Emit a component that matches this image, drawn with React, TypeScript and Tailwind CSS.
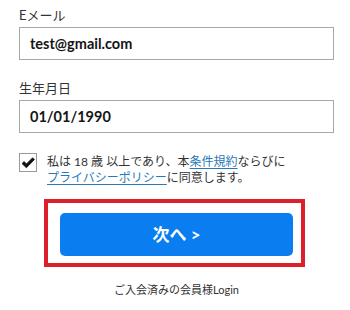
import React from "react";

export default function App() {
  const font = { fontFamily: '"Lato", "Noto Sans CJK JP", sans-serif' };
  return (
    <div
      className="w-[350px] h-[310px] bg-white pl-[19px] pt-[7px] text-[#222]"
      style={font}
    >
      <div className="w-[315px]">
        <div className="text-[13px] leading-[16px] text-[#333] mb-[4px]">Eメール</div>
        <div className="h-[33px] border border-[#a8a8a8] flex items-center pl-[10px] text-[14.5px] font-bold text-[#151515]">
          test@gmail.com
        </div>
        <div className="text-[13px] leading-[16px] text-[#333] mt-[20px] mb-[4px]">生年月日</div>
        <div className="h-[33px] border border-[#a8a8a8] flex items-center pl-[10px] text-[14.5px] font-bold text-[#151515]">
          01/01/1990
        </div>

        <div className="flex items-start mt-[20px]">
          <div className="w-[18px] h-[19px] border border-[#9a9a9a] bg-white flex items-center justify-center shrink-0">
            <svg width="14" height="12" viewBox="0 0 14 12">
              <path
                d="M1 6.6 L3.2 4.6 L5.4 7 L11.6 0.8 L13.4 2.6 L5.4 10.8 Z"
                fill="#111"
                stroke="#111"
                strokeWidth="0.8"
                strokeLinejoin="round"
              />
            </svg>
          </div>
          <div className="ml-[10px] text-[12px] leading-[16px] text-[#333] mt-[1px]">
            <div>
              私は 18 歳 以上であり、本
              <span className="text-[#2a78b6] underline underline-offset-2">条件規約</span>
              ならびに
            </div>
            <div>
              <span className="text-[#2a78b6] underline underline-offset-2">プライバシーポリシー</span>
              に同意します。
            </div>
          </div>
        </div>

        <div className="ml-[25px] mt-[13px] w-[261px] h-[68px] border-[4px] border-[#dc1f2b] pt-[10px] pl-[12px]">
          <div className="w-[233px] h-[43px] rounded-[5px] bg-[#0a7ef0] flex items-center justify-center text-white text-[17px] font-bold">
            次へ &gt;
          </div>
        </div>

        <div className="mt-[15px] text-center text-[11px] leading-[16px] text-[#333]">
          ご入会済みの会員様Login
        </div>
      </div>
    </div>
  );
}
